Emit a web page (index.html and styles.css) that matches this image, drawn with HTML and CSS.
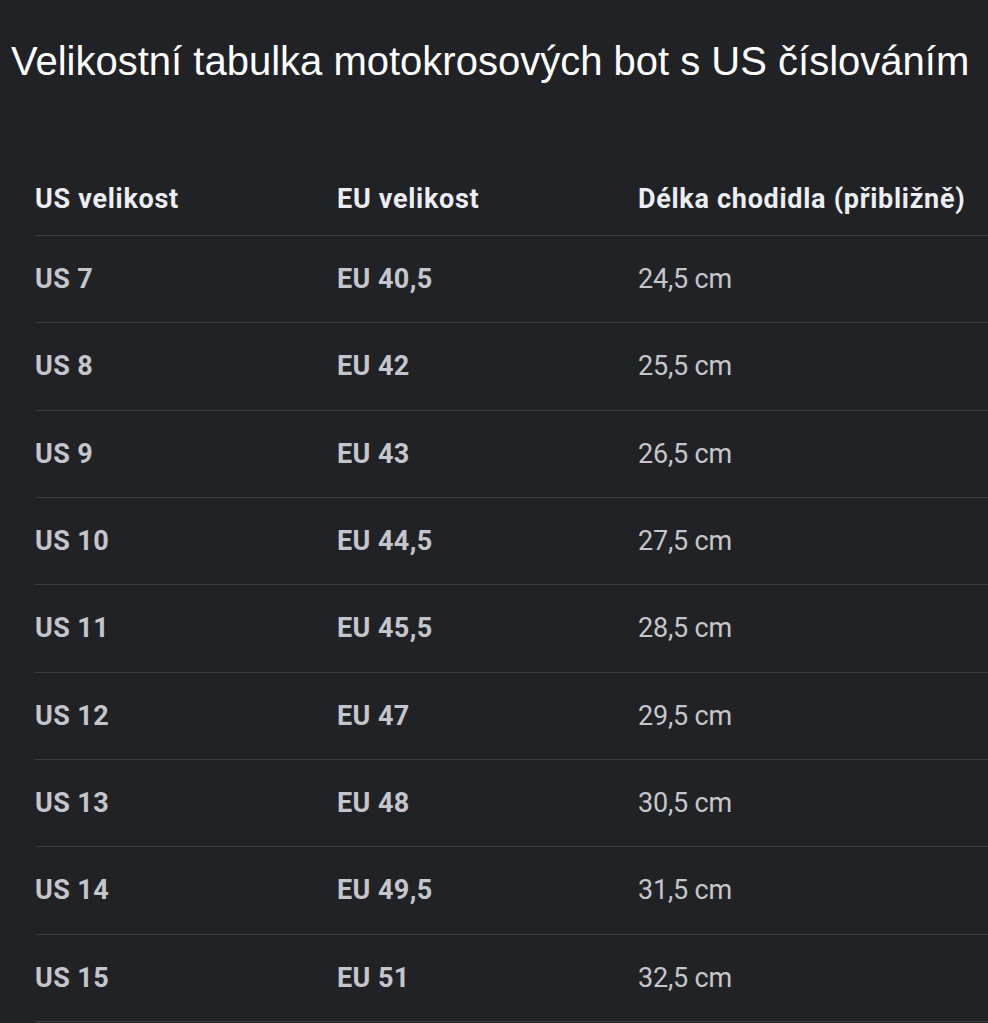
FILE: index.html
```html
<!DOCTYPE html>
<html lang="cs">
<head>
<meta charset="utf-8">
<title>Velikostní tabulka</title>
<link rel="stylesheet" href="styles.css">
</head>
<body>
<h1 class="title">Velikostní tabulka motokrosových bot s US číslováním</h1>
<table class="sizes">
  <thead>
    <tr><th class="c1">US velikost</th><th class="c2">EU velikost</th><th class="c3">Délka chodidla (přibližně)</th></tr>
  </thead>
  <tbody>
    <tr><td class="b">US 7</td><td class="b">EU 40,5</td><td>24,5 cm</td></tr>
    <tr><td class="b">US 8</td><td class="b">EU 42</td><td>25,5 cm</td></tr>
    <tr><td class="b">US 9</td><td class="b">EU 43</td><td>26,5 cm</td></tr>
    <tr><td class="b">US 10</td><td class="b">EU 44,5</td><td>27,5 cm</td></tr>
    <tr><td class="b">US 11</td><td class="b">EU 45,5</td><td>28,5 cm</td></tr>
    <tr><td class="b">US 12</td><td class="b">EU 47</td><td>29,5 cm</td></tr>
    <tr><td class="b">US 13</td><td class="b">EU 48</td><td>30,5 cm</td></tr>
    <tr><td class="b">US 14</td><td class="b">EU 49,5</td><td>31,5 cm</td></tr>
    <tr><td class="b">US 15</td><td class="b">EU 51</td><td>32,5 cm</td></tr>
  </tbody>
</table>
</body>
</html>
```
FILE: styles.css
```css
html, body {
  margin: 0;
  padding: 0;
  background: #212226;
}
body {
  overflow: hidden;
  height: 1023px;
}
.title {
  margin: 37px 0 0 11px;
  font-family: "Liberation Sans", Arial, sans-serif;
  font-weight: normal;
  font-size: 40px;
  line-height: 48px;
  color: #ffffff;
  white-space: nowrap;
}
.sizes {
  margin: 78px 0 0 35px;
  width: 953px;
  border-collapse: collapse;
  table-layout: fixed;
  font-family: Roboto, "Noto Sans", sans-serif;
  font-size: 27px;
}
.sizes th {
  height: 72px;
  padding: 0;
  text-align: left;
  vertical-align: middle;
  font-weight: 700;
  letter-spacing: 0.7px;
  color: #eceef4;
  border-bottom: 1px solid #3c3d42;
  white-space: nowrap;
}
.sizes .c1 { width: 302px; }
.sizes .c2 { width: 301px; }
.sizes td {
  height: 86.33px;
  padding: 0;
  vertical-align: middle;
  color: #c4c6cb;
  border-bottom: 1px solid #3c3d42;
  white-space: nowrap;
  letter-spacing: -0.2px;
}
.sizes td.b {
  font-weight: 700;
  letter-spacing: 0.4px;
}
```
